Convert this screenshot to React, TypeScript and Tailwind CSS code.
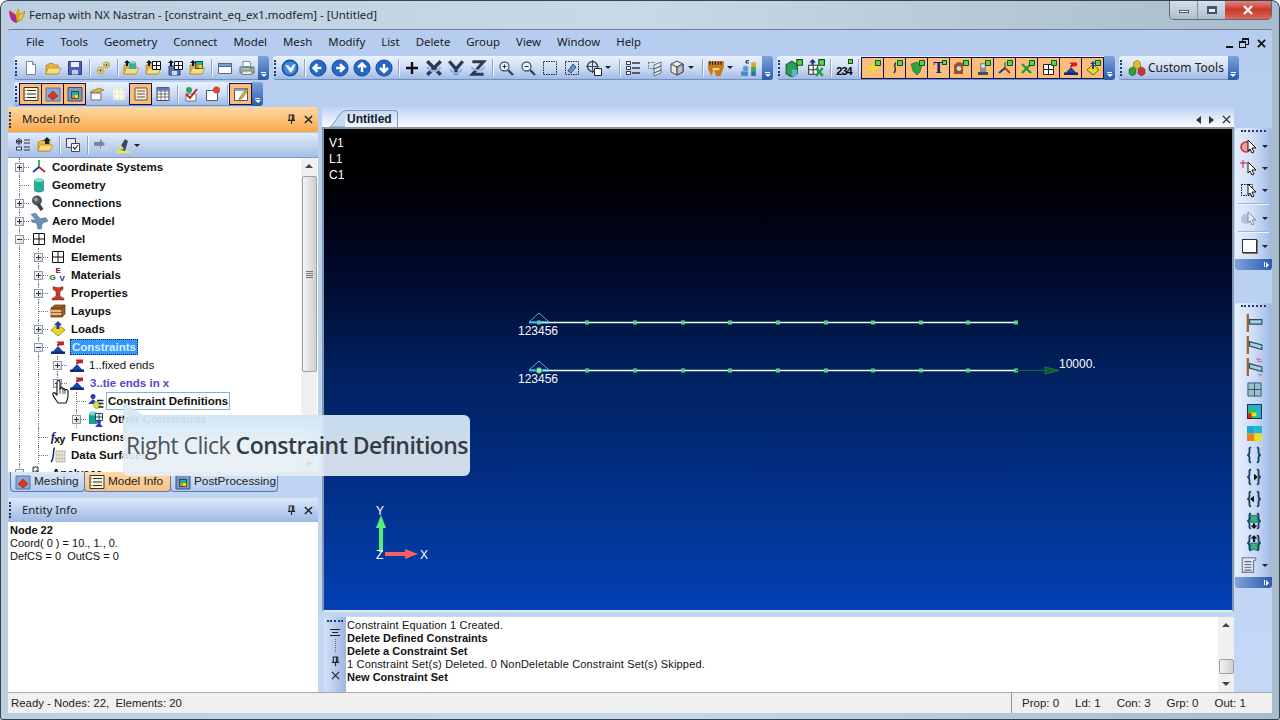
import type { ReactNode } from "react";

const SANS = "font-['Liberation_Sans',Arial,sans-serif]";
const UI = "font-['Noto_Sans',Arial,sans-serif]";

const S = ({ children, w = 16 }: { children: ReactNode; w?: number }) => (
  <svg viewBox="0 0 16 16" width={w} height={w} className="shrink-0">
    {children}
  </svg>
);

/* ---------- toolbar icons ---------- */
const NewDoc = () => (
  <S>
    <path d="M3.5 1.5h6l3 3v10h-9z" fill="#fff" stroke="#7a869c" />
    <path d="M9.5 1.5v3h3" fill="#d8e2f0" stroke="#7a869c" />
  </S>
);
const Folder = ({ children }: { children?: ReactNode }) => (
  <S>
    <path d="M1 14V5h2l1-1.5h4L9 5h4v9z" fill="#e8b840" stroke="#a07820" strokeWidth=".7" />
    <path d="M1 14l2-6h13l-3 6z" fill="#f8dc80" stroke="#b08a28" strokeWidth=".7" />
    {children}
  </S>
);
const Save = () => (
  <S>
    <path d="M1.5 1.5h13v13h-13z" fill="#4a62b8" stroke="#2c3c80" />
    <path d="M4 2h8v5H4z" fill="#e8eef8" />
    <path d="M5 10h6v4.500H5z" fill="#c4cce0" />
  </S>
);
const Gears = () => (
  <S>
    <circle cx="5.5" cy="10.5" r="3" fill="none" stroke="#d8b000" strokeWidth="2" strokeDasharray="1.4 .6" />
    <circle cx="11.5" cy="5" r="2.6" fill="none" stroke="#c8a000" strokeWidth="2" strokeDasharray="1.4 .6" />
    <circle cx="5.5" cy="10.5" r="1" fill="#333" />
    <circle cx="11.5" cy="5" r=".9" fill="#333" />
  </S>
);
const Up = () => <path d="M4 0l3 3H5v3H3V3H1z" fill="#111" />;
const GridBox = ({ x = 7, y = 1, s = 8, c = "#111" }: { x?: number; y?: number; s?: number; c?: string }) => (
  <g fill="#fff" stroke={c}>
    <path d={`M${x + 0.5} ${y + 0.5}h${s}v${s}h-${s}z`} />
    <path d={`M${x + 0.5 + s / 2} ${y + 0.5}v${s}M${x + 0.5} ${y + 0.5 + s / 2}h${s}`} fill="none" />
  </g>
);
const ColorGrid = ({ x = 6, y = 1 }: { x?: number; y?: number }) => (
  <g>
    <path d={`M${x} ${y}h4v4h-4z`} fill="#18a8d8" />
    <path d={`M${x + 4} ${y}h4v4h-4z`} fill="#18c060" />
    <path d={`M${x} ${y + 4}h4v4h-4z`} fill="#f08010" />
    <path d={`M${x + 4} ${y + 4}h4v4h-4z`} fill="#e8e020" />
    <path d={`M${x + 0.5} ${y + 0.5}h7v7h-7z`} fill="none" stroke="#234" strokeWidth=".8" />
  </g>
);
const FolderCyl = () => (
  <Folder>
    <path d="M6 2h7v7H6z" fill="#30b0a0" />
    <ellipse cx="9.5" cy="2.2" rx="3.5" ry="1.2" fill="#80e0d0" />
    <Up />
  </Folder>
);
const FolderGrid = () => (
  <Folder>
    <GridBox />
    <Up />
  </Folder>
);
const DiskGrid = () => (
  <S>
    <path d="M2 6h11v9H2z" fill="#5a70b8" stroke="#304080" />
    <path d="M5 11h5v4H5z" fill="#d0d8e8" />
    <GridBox />
    <Up />
  </S>
);
const FolderColor = () => (
  <Folder>
    <ColorGrid />
    <Up />
  </Folder>
);
const WinIcon = () => (
  <S>
    <path d="M1.5 3.5h13v10h-13z" fill="#fff" stroke="#4a6890" />
    <path d="M1.5 3.5h13v3h-13z" fill="#7aa0d0" stroke="#4a6890" />
  </S>
);
const Printer = () => (
  <S>
    <path d="M4 1.5h7l1 5H4z" fill="#fff" stroke="#7a8a98" />
    <path d="M1 7h14v6H1z" fill="#a8b4b8" stroke="#607070" />
    <path d="M3 11h10v3.5H3z" fill="#e8ece8" stroke="#708080" />
    <path d="M11 8.5h2" stroke="#20b040" strokeWidth="1.4" />
  </S>
);
const Globe = () => (
  <S w={18}>
    <circle cx="8" cy="8" r="7" fill="#2a6cc0" stroke="#174a90" />
    <circle cx="8" cy="8" r="5.6" fill="#3f8ad8" />
    <path d="M3.5 5l3 .5 2 2.5 2-3 2.5-.5-2 5-2.5 3-2-3z" fill="#e8f2fc" />
  </S>
);
const ArrowCircle = ({ d }: { d: string }) => (
  <S w={18}>
    <circle cx="8" cy="8" r="7.2" fill="#2468c0" stroke="#184c90" strokeWidth=".8" />
    <path d={d} fill="none" stroke="#fff" strokeWidth="2.2" />
  </S>
);
const Plus = () => (
  <S>
    <path d="M8 2v12M2 8h12" stroke="#111" strokeWidth="2.4" />
  </S>
);
const RotX = () => (
  <S w={18}>
    <path d="M2 2l12 12M14 2L2 14" stroke="#2c3c58" strokeWidth="3" />
    <path d="M2 7c3 5 9 5 12 0" fill="none" stroke="#8ab8e8" strokeWidth="2" />
  </S>
);
const RotY = () => (
  <S w={18}>
    <path d="M2 2l6 7 6-7M8 9v5" fill="none" stroke="#2c3c58" strokeWidth="3" />
    <path d="M3 9c3 5 7 5 10 0" fill="none" stroke="#8ab8e8" strokeWidth="2" />
  </S>
);
const RotZ = () => (
  <S w={18}>
    <path d="M3 2.500h10L3 13.500h10" fill="none" stroke="#2c3c58" strokeWidth="2.600" />
    <path d="M2 7c3 4 9 4 12 0" fill="none" stroke="#8ab8e8" strokeWidth="1.600" />
  </S>
);
const Zoom = ({ plus }: { plus?: boolean }) => (
  <S>
    <circle cx="6.500" cy="6.500" r="4.500" fill="#eaf2fc" stroke="#4a5c78" strokeWidth="1.300" />
    <path d="M10 10l5 5" stroke="#384658" strokeWidth="2.400" />
    <path d={plus ? "M4.500 6.500h4M6.500 4.500v4" : "M4.500 6.500h4"} stroke="#234" />
  </S>
);
const Marquee = () => (
  <S>
    <path d="M1.500 1.500h13v13h-13z" fill="none" stroke="#222" strokeDasharray="1.500 1" />
  </S>
);
const MarqueeIso = () => (
  <S>
    <path d="M1.500 1.500h13v13h-13z" fill="none" stroke="#222" strokeDasharray="1.500 1" />
    <path d="M4 11L9 4l3 3-5 6z" fill="#6a94c8" stroke="#34507c" />
  </S>
);
const Target = () => (
  <S>
    <circle cx="6.500" cy="6.500" r="5" fill="none" stroke="#3a4a50" strokeWidth="1.400" />
    <path d="M6.500 0v13M0 6.500h13" stroke="#3a4a50" />
    <path d="M8.500 8.500h7v7h-7z" fill="#fff" stroke="#223" />
  </S>
);
const ListBox = () => (
  <S>
    <path d="M1.500 1.500h4v3h-4zM1.500 6.500h4v3h-4zM1.500 11.500h4v3h-4z" fill="#fff" stroke="#334" />
    <path d="M7 3h8M7 8h8M7 13h8" stroke="#334" strokeWidth="1.400" />
  </S>
);
const Layers = () => (
  <S>
    <path d="M1.500 2.500h6v6h-6z" fill="none" stroke="#667" strokeDasharray="1.500 1" />
    <path d="M7 5l7-3v4l-7 3zM7 9l7-3v4l-7 3zM7 13l7-3v3l-7 3z" fill="#e4ecf6" stroke="#556" strokeWidth=".8" />
  </S>
);
const Cube = () => (
  <S>
    <path d="M8 1l6 3v8l-6 3-6-3V4z" fill="#e8e8e0" stroke="#445" />
    <path d="M2 4l6 3 6-3M8 7v8" fill="none" stroke="#445" />
    <path d="M8 7l6-3v8l-6 3z" fill="#b8c0c4" stroke="#445" />
  </S>
);
const Ruler = () => (
  <S w={18}>
    <path d="M1 2h14v5l-3 8H8L6 9 4 15 1 9z" fill="#c87818" />
    <path d="M2.500 2v3M5 2v3M7.500 2v3M10 2v3M12.500 2v3" stroke="#222" />
    <path d="M5 9h6" stroke="#f0e060" strokeWidth="2" />
  </S>
);
const Bars = () => (
  <S w={18}>
    <path d="M1 11h6v4H1z" fill="#4a88c8" />
    <circle cx="5" cy="8.500" r="2.500" fill="#58a0d0" />
    <path d="M10 3h4v12h-4z" fill="#e8a020" />
    <path d="M10 7h4v4h-4z" fill="#30b060" />
    <path d="M10 11h4v4h-4z" fill="#2070c0" />
    <path d="M5 1h3v1H6v1h2v1H5z" fill="#225" />
  </S>
);
const GroupAdd = () => (
  <S w={18}>
    <path d="M1 5l5-3 5 3v8l-5 3-5-3z" fill="#2c9c58" stroke="#1a6038" />
    <path d="M6 9l5 1v4l-5 2z" fill="#58b8c8" />
    <path d="M10.500 .500h5v5h-5z" fill="#58d848" stroke="#145020" />
  </S>
);
const GroupX = () => (
  <S w={18}>
    <GridBox x={1} y={5} s={8} c="#333" />
    <path d="M5 0l3 3H6v2H4V3H2z" fill="#1a2a90" />
    <path d="M8 8l6 7M14 8l-6 7" stroke="#20a040" strokeWidth="2.200" />
    <path d="M10.500 .500h5v5h-5z" fill="#58d848" stroke="#145020" />
  </S>
);
const Badge = () => <path d="M10.500 .500h5v5h-5z" fill="#58d848" stroke="#145020" />;

const Orange = ({ children }: { children: ReactNode }) => (
  <div className="w-[23px] h-[22px] border border-[#10105c] bg-[#fbbd78] flex items-center justify-center -ml-px first:ml-0 shrink-0">
    {children}
  </div>
);

const Constraint = ({ w = 16 }: { w?: number }) => (
  <S w={w}>
    <path d="M2 13.500L8 7l6 6.500z" fill="#1848a8" />
    <path d="M1 12.500h14v2.500H1z" fill="#152a70" />
    <path d="M7 7V2.500h7V6z" fill="#c8202c" />
    <path d="M6 6l2-2" stroke="#fff" />
  </S>
);
const Axes = () => (
  <S>
    <path d="M8 8V1" stroke="#20b050" strokeWidth="1.800" />
    <path d="M8 8l6 5" stroke="#d02828" strokeWidth="1.800" />
    <path d="M8 8l-6 5" stroke="#2030b0" strokeWidth="1.800" />
  </S>
);
const Cyl = () => (
  <S>
    <path d="M3.500 3h9v10.500c-2 2-7 2-9 0z" fill="#20b098" stroke="#1a7060" strokeWidth=".6" />
    <ellipse cx="8" cy="3" rx="4.500" ry="2" fill="#7ce0c8" />
  </S>
);
const Bolt = () => (
  <S>
    <circle cx="6" cy="5.500" r="5" fill="#50565c" />
    <circle cx="5" cy="4.500" r="2" fill="#9aa0a8" />
    <path d="M7 9l4 6" stroke="#3a3e44" strokeWidth="3.500" />
  </S>
);
const Aero = () => (
  <S w={18}>
    <path d="M1 2l4-1 4 5 5-1 2 3-5 2-1 5h-3l-1-5-4-1-1-2h4z" fill="#6a90b8" stroke="#486a90" strokeWidth=".5" />
  </S>
);
const Rail = () => (
  <S>
    <path d="M3 1.500c3 1.500 7 1.500 10 0v3c-2 1-3 2-3 3v3c0 1 2 2 4 3v1.500H2V13.500c2-1 4-2 4-3v-3c0-1-1-2-3-3z" fill="#c03a30" stroke="#802018" strokeWidth=".5" />
  </S>
);
const Layup = () => (
  <S>
    <path d="M1 5l4-3h10v9l-3 3H1z" fill="#a86428" stroke="#4a2a10" strokeWidth=".7" />
    <path d="M1 8h11M1 11h11" stroke="#f0d8a0" strokeWidth="1.500" />
    <path d="M12 5v9M1 5h11l3-3" fill="none" stroke="#4a2a10" strokeWidth=".7" />
  </S>
);
const Load = () => (
  <S>
    <path d="M8 3l7 6-7 6-7-6z" fill="#e8d820" stroke="#807000" strokeWidth=".7" />
    <path d="M8 0l4 4H9.500v4h-3V4H4z" fill="#2838b0" />
  </S>
);
const ConDef = () => (
  <S>
    <circle cx="5" cy="3.500" r="2.500" fill="#3038b0" />
    <path d="M0 11l5-5 5 5z" fill="#3038b0" />
    <circle cx="9" cy="12" r="3.500" fill="#d8e048" stroke="#80a020" strokeWidth=".6" />
    <path d="M9 7.500h6.500M10.500 10.500h5M10.500 14h5" stroke="#225" strokeWidth="1.300" />
  </S>
);
const Other = () => (
  <S>
    <path d="M1 2h8v11H1z" fill="#18a090" />
    <ellipse cx="5" cy="2.500" rx="4" ry="2" fill="#70d8c8" />
    <GridBox x={7} y={2} s={7} c="#246" />
    <circle cx="11" cy="11" r="2" fill="#3038b0" />
    <path d="M7 16l4-4.500 4 4.500z" fill="#3038b0" />
  </S>
);
const ListIcon = () => (
  <S>
    <path d="M1 1.500h14v13H1z" fill="#fdf4d8" stroke="#333" />
    <path d="M4 4.500h9M4 8h9M4 11.500h9M1.500 4.500h1M1.500 8h1M1.500 11.500h1" stroke="#234" strokeWidth="1.200" />
  </S>
);
const MeshIcon = () => (
  <S>
    <path d="M1 2h14v13H1z" fill="#8aa8d8" stroke="#5878a8" />
    <path d="M8 5l5 5-5 4-5-4z" fill="#d83818" stroke="#902010" strokeWidth=".6" />
  </S>
);
const WinColor = () => (
  <S>
    <path d="M1 1.500h14v13.500H1z" fill="#7898c8" stroke="#35507a" />
    <ColorGrid x={4} y={5} />
  </S>
);

const Sep = () => (
  <div className="w-[6px] h-[18px] flex justify-center shrink-0">
    <div className="w-px h-full bg-[#8ea6cc] shadow-[1px_0_0_#f2f7ff]" />
  </div>
);
const Btn = ({ children }: { children: ReactNode }) => (
  <div className="w-[22px] h-[22px] flex items-center justify-center shrink-0">{children}</div>
);
const Caret = () => (
  <div className="w-[11px] h-[22px] flex items-center shrink-0">
    <div className="border-x-[3px] border-x-transparent border-t-[3px] border-t-[#222]" />
  </div>
);
const Grip = () => (
  <div className="w-[6px] h-[16px] shrink-0 border-l-2 border-dotted border-l-[#1f3a70] ml-[1px] -mr-[1px]" />
);
const Chevron = () => (
  <div className="w-[11px] self-stretch rounded-r-[3px] bg-gradient-to-b from-[#7fa2dc] to-[#2a5cab] flex flex-col items-center justify-end pb-[3px] gap-px shrink-0">
    <div className="w-[5px] h-px bg-white" />
    <div className="border-x-[3px] border-x-transparent border-t-[3px] border-t-white" />
  </div>
);
const Toolbar = ({ children, className = "" }: { children: ReactNode; className?: string }) => (
  <div className={`flex h-[24px] shrink-0 ${className}`}>
    <div className="flex items-center rounded-l-[3px] bg-gradient-to-b from-[#e9f1fd] via-[#cfdef6] to-[#a2bbe4] border-b border-b-[#6f8fc4]">
      {children}
    </div>
    <Chevron />
  </div>
);

/* ---------- tree ---------- */
type RowProps = {
  guides: boolean[];
  exp?: "+" | "-";
  icon: ReactNode;
  children: ReactNode;
};
const Guide = ({ on }: { on: boolean }) => (
  <div className="w-[19px] h-[18px] shrink-0 flex justify-center">
    {on && <div className="h-full border-l border-dotted border-l-[#777]" />}
  </div>
);
const Row = ({ guides, exp, icon, children }: RowProps) => (
  <div className="flex items-center h-[18px] whitespace-nowrap">
    {guides.map((g, i) => (
      <Guide key={i} on={g} />
    ))}
    <div className="relative w-[19px] h-[18px] shrink-0 flex items-center justify-center">
      <div className="absolute left-[9px] top-0 h-full border-l border-dotted border-l-[#777]" />
      <div className="absolute left-[9px] right-0 top-[9px] border-t border-dotted border-t-[#777]" />
      {exp && (
        <div className="relative w-[9px] h-[9px] border border-[#8c98a8] bg-gradient-to-br from-white to-[#d4dce8] flex items-center justify-center">
          <div className="w-[5px] h-px bg-[#333]" />
          {exp === "+" && <div className="absolute w-px h-[5px] bg-[#333]" />}
        </div>
      )}
    </div>
    <div className="w-[19px] flex justify-center shrink-0">{icon}</div>
    {children}
  </div>
);
const Label = ({ children }: { children: ReactNode }) => (
  <span className="ml-[4px] mt-[2px] font-bold text-[#111]">{children}</span>
);

const Tab = ({ on, icon, children, w }: { on?: boolean; icon: ReactNode; children: ReactNode; w: string }) => (
  <div
    className={`h-[20px] ${w} flex items-center gap-[3px] pl-[4px] rounded-b-[4px] border border-t-0 border-[#5c7ba8] text-[11.8px] text-[#222] -ml-px first:ml-0 ${
      on ? "bg-gradient-to-b from-[#fdd9a8] to-[#f9c080]" : "bg-gradient-to-b from-[#dbe7f8] to-[#b4cbee]"
    }`}
  >
    {icon}
    <span>{children}</span>
  </div>
);

const Scrollbar = ({ top, thumb, children }: { top: string; thumb: string; children?: ReactNode }) => (
  <div className="w-[16px] shrink-0 bg-[#f0f0f0] flex flex-col items-center relative">
    <div className="h-[16px] flex items-center justify-center shrink-0">
      <div className="border-x-[4px] border-x-transparent border-b-[4px] border-b-[#444]" />
    </div>
    <div className={`${top} shrink-0`} />
    <div className={`${thumb} w-[15px] shrink-0 rounded-[2px] border border-[#a0a0a0] bg-gradient-to-r from-[#f4f4f4] to-[#cfcfcf] flex flex-col items-center justify-center gap-px`}>
      {children}
    </div>
    <div className="flex-1" />
    <div className="h-[16px] flex items-center justify-center shrink-0">
      <div className="border-x-[4px] border-x-transparent border-t-[4px] border-t-[#444]" />
    </div>
  </div>
);

const PinClose = () => (
  <div className="flex items-center gap-[8px] mr-[5px]">
    <svg viewBox="0 0 10 12" width="9" height="11">
      <path d="M2.500 1h5v6h-5zM1 7h8M5 7v4M6 1v6" fill="none" stroke="#222" strokeWidth="1.200" />
    </svg>
    <svg viewBox="0 0 10 10" width="9" height="9">
      <path d="M1 1l8 8M9 1L1 9" stroke="#222" strokeWidth="1.600" />
    </svg>
  </div>
);

const VT = ({ children, h, className = "" }: { children: ReactNode; h: string; className?: string }) => (
  <div className={`${h} w-[37px] ml-[1px] rounded-[3px] overflow-hidden flex flex-col bg-gradient-to-r from-[#e6effc] via-[#cfdef6] to-[#9fb8e2] ${className}`}>
    <div className="h-[5px] mx-[6px] mt-[2px] shrink-0 border-t-2 border-dotted border-t-[#1f3a70]" />
    <div className="flex-1 flex flex-col">{children}</div>
    <div className="h-[11px] shrink-0 bg-gradient-to-r from-[#7fa2dc] to-[#2a5cab] flex items-center justify-end pr-[3px] gap-px">
      <div className="w-px h-[5px] bg-white" />
      <div className="border-y-[3px] border-y-transparent border-l-[3px] border-l-white" />
    </div>
  </div>
);
const VItem = ({ children, caret, center }: { children: ReactNode; caret?: boolean; center?: boolean }) => (
  <div className={`h-[22px] flex items-center shrink-0 gap-[4px] ${center ? "pl-[10px]" : "pl-[5px]"}`}>
    <div className="w-[18px] flex justify-center shrink-0">{children}</div>
    {caret && <div className="border-x-[3px] border-x-transparent border-t-[3px] border-t-[#222]" />}
  </div>
);
const VSep = () => <div className="h-[6px] mx-[3px] shrink-0 flex items-center"><div className="w-full h-px bg-[#f0f5ff] shadow-[0_-1px_0_#9db5da]" /></div>;
const Pointer = ({ children, faded }: { children?: ReactNode; faded?: boolean }) => (
  <svg viewBox="0 0 18 18" width="18" height="18" className={faded ? "opacity-40" : ""}>
    {children}
    <path d="M8 3l8 8h-4l2 4-2 1-2-4-2 2z" fill="#fff" stroke="#111" />
  </svg>
);
const Beam = ({ tilt = 0, waves }: { tilt?: number; waves?: boolean }) => (
  <S w={18}>
    <path d="M2.500 0v16" stroke="#a06428" strokeWidth="2" />
    <path d={`M4 5l11 ${tilt}v4l-11 ${-tilt}z`} fill="#a8d0d8" stroke="#204a70" />
    {waves && <path d="M10 1c1-1 2 1 4 0M11 3c1-1 2 1 4 0M12 15c1-1 2 1 3 0" fill="none" stroke="#c83868" strokeWidth=".8" />}
  </S>
);
const Brace = ({ children }: { children?: ReactNode }) => (
  <S w={18}>
    <path d="M5.500 1.500H5C3.500 1.500 4 3 4 5 4 7 3.500 8 2 8c1.500 0 2 1 2 3s-.5 3.500 1 3.500h.5M10.500 1.500h.5c1.500 0 1 1.500 1 3.500 0 2 .5 3 2 3-1.500 0-2 1-2 3s.5 3.500-1 3.500h-.5" fill="none" stroke="#15406c" strokeWidth="1.600" />
    {children}
  </S>
);

const NODE_X = [539, 587, 635, 683, 730, 778, 826, 873, 921, 968, 1016];

// viewBox uses the window's own pixel coordinates, so the model reads as plotted
const Viewport = () => (
  <svg viewBox="324 129 908 481" className="absolute inset-0 w-full h-full">
    {[322, 370].map((y) => (
      <g key={y}>
        <path d={`M529 ${y + 0.5}h20`} stroke="#3fb4dc" strokeWidth="2" />
        <path d={`M539 ${y + 0.5}H1016`} stroke="#eafff2" strokeWidth="1.500" />
        {NODE_X.map((x) => (
          <rect key={x} x={x - 2} y={y - 1.500} width="4" height="4" fill="#5fd08a" />
        ))}
        <path d={`M529 ${y}l10-9 10 9z`} fill="none" stroke="#4fb8e0" />
        <text x="518" y={y + 13} fill="#f4f8ff" fontSize="12" fontFamily="Liberation Sans">123456</text>
      </g>
    ))}
    <circle cx="539" cy="370.500" r="3" fill="#8ff0b0" stroke="#2a7050" />
    <path d="M1016 370.500h43" stroke="#0c6a30" strokeWidth="1.200" />
    <path d="M1045 367v7l14-3.500z" fill="#0a5a2c" stroke="#1a8a44" strokeWidth=".8" />
    <text x="1059" y="368" fill="#fff" fontSize="12" fontFamily="Liberation Sans">10000.</text>
    <path d="M381 552V526" stroke="#55ee77" strokeWidth="4" />
    <path d="M376 528l5-13 5 13z" fill="#55ee77" />
    <path d="M385 554h22" stroke="#f86060" strokeWidth="4" />
    <path d="M405 549l13 5-13 5z" fill="#f86060" />
    <text x="376" y="515" fill="#fff" fontSize="12" fontFamily="Liberation Sans">Y</text>
    <text x="376" y="559" fill="#fff" fontSize="12" fontFamily="Liberation Sans">Z</text>
    <text x="420" y="559" fill="#fff" fontSize="12" fontFamily="Liberation Sans">X</text>
  </svg>
);

export default function App() {
  const menu = ["File", "Tools", "Geometry", "Connect", "Model", "Mesh", "Modify", "List", "Delete", "Group", "View", "Window", "Help"];

  return (
    <div className={`relative w-[1280px] h-[720px] overflow-hidden flex flex-col rounded-t-[8px] bg-gradient-to-r from-[#bccfe2] via-[#c8d8e6] to-[#a8bccb] ${SANS} text-[12px] text-[#111]`}>
      {/* Title bar */}
      <div className="h-[29px] shrink-0 flex items-start">
        <div className="ml-[8px] mt-[6px] w-[18px] h-[18px]">
          <S w={18}>
            <path d="M2 3l5 4 2-6 2 6 4-2-2 6c-2 4-8 4-10 0z" fill="#d8b028" />
            <path d="M1 4l6 4 1 7c-4 0-7-4-7-11z" fill="#a82898" />
            <path d="M9 8l6-3-2 6-4 3z" fill="#e8c830" stroke="#806010" strokeWidth=".4" />
          </S>
        </div>
        <div className={`ml-[3px] mt-[6px] text-[11.4px] text-[#1c2430] whitespace-nowrap ${UI}`}>
          Femap with NX Nastran - [constraint_eq_ex1.modfem] - [Untitled]
        </div>
        <div className="ml-auto mr-[8px] flex h-[20px] rounded-b-[5px] overflow-hidden border border-t-0 border-[#5b6b78]">
          <div className="w-[28px] bg-gradient-to-b from-[#d6e2ec] to-[#aebfce] flex items-center justify-center border-r border-r-[#7f8f9c]">
            <div className="w-[10px] h-[3px] mt-[4px] bg-white border border-[#556]" />
          </div>
          <div className="w-[27px] bg-gradient-to-b from-[#d6e2ec] to-[#aebfce] flex items-center justify-center">
            <div className="w-[10px] h-[8px] bg-white/60 border-2 border-t-[3px] border-[#445766]" />
          </div>
          <div className="w-[46px] bg-gradient-to-b from-[#e09088] via-[#c8382c] to-[#d86858] flex items-center justify-center">
            <svg viewBox="0 0 12 10" width="12" height="10">
              <path d="M2 1l8 8M10 1L2 9" stroke="#fff" strokeWidth="2.400" />
            </svg>
          </div>
        </div>
      </div>

      {/* Application */}
      <div className="mx-[8px] flex-1 min-h-0 flex flex-col bg-gradient-to-b from-[#b6cdef] to-[#c4d8f6] border-t border-t-[#6a7f98] rounded-t-[2px]">
        {/* Menu */}
        <div className={`h-[26px] shrink-0 flex items-center ${UI}`}>
          <div className="flex ml-[18px] mb-[2px] gap-[16px] text-[11.4px] text-[#1a1a1a]">
            {menu.map((m) => (
              <span key={m}>{m}</span>
            ))}
          </div>
          <div className="ml-auto mr-[6px] flex items-center gap-[6px]">
            <div className="w-[7px] h-[2px] bg-[#111] mt-[8px]" />
            <div className="relative w-[10px] h-[10px]">
              <div className="absolute right-0 top-0 w-[7px] h-[7px] border border-t-2 border-[#111]" />
              <div className="absolute left-0 bottom-0 w-[7px] h-[7px] border border-t-2 border-[#111] bg-[#bcd2f2]" />
            </div>
            <svg viewBox="0 0 10 10" width="9" height="9" className="ml-[2px]">
              <path d="M1 1l8 8M9 1L1 9" stroke="#111" strokeWidth="2" />
            </svg>
          </div>
        </div>

        {/* Toolbar row 1 */}
        <div className="h-[26px] shrink-0 flex items-start pl-[6px]">
          <Toolbar>
            <Grip />
            <Btn><NewDoc /></Btn>
            <Btn><Folder /></Btn>
            <Btn><Save /></Btn>
            <Sep />
            <Btn><Gears /></Btn>
            <Sep />
            <Btn><FolderCyl /></Btn>
            <Btn><FolderGrid /></Btn>
            <Btn><DiskGrid /></Btn>
            <Btn><FolderColor /></Btn>
            <Sep />
            <Btn><WinIcon /></Btn>
            <Btn><Printer /></Btn>
          </Toolbar>
          <Toolbar className="ml-[4px]">
            <Grip />
            <Btn><Globe /></Btn>
            <Sep />
            <Btn><ArrowCircle d="M11 8H4.500M7.500 4.500L4 8l3.500 3.500" /></Btn>
            <Btn><ArrowCircle d="M4.500 8H11M8 4.500L11.500 8 8 11.500" /></Btn>
            <Btn><ArrowCircle d="M8 11.500V4.500M4.500 7.500L8 4l3.500 3.500" /></Btn>
            <Btn><ArrowCircle d="M8 4.500V11M4.500 8L8 11.500 11.500 8" /></Btn>
            <Sep />
            <Btn><Plus /></Btn>
            <Btn><RotX /></Btn>
            <Btn><RotY /></Btn>
            <Btn><RotZ /></Btn>
            <Sep />
            <Btn><Zoom plus /></Btn>
            <Btn><Zoom /></Btn>
            <Btn><Marquee /></Btn>
            <Btn><MarqueeIso /></Btn>
            <Btn><Target /></Btn>
            <Caret />
            <Sep />
            <Btn><ListBox /></Btn>
            <Btn><Layers /></Btn>
            <Btn><Cube /></Btn>
            <Caret />
            <Sep />
            <Btn><Ruler /></Btn>
            <Caret />
            <Btn><Bars /></Btn>
            <div className="w-[2px]" />
          </Toolbar>
          <Toolbar className="ml-[4px]">
            <Grip />
            <Btn><GroupAdd /></Btn>
            <Btn><GroupX /></Btn>
            <Sep />
            <Btn>
              <div className="relative w-[18px] h-[18px] flex items-end justify-center">
                <span className="font-bold text-[11px] leading-[12px] tracking-[-1px] text-black">234</span>
                <div className="absolute right-0 top-0 w-[5px] h-[5px] bg-[#58d848] border border-[#145020]" />
              </div>
            </Btn>
            <Sep />
            <div className="flex">
              <Orange><S><path d="M8 3v10M3 8h10" stroke="#f0e020" strokeWidth="2" /><Badge /></S></Orange>
              <Orange><S><path d="M9 3C5 5 11 8 7 13" fill="none" stroke="#333" strokeWidth="1.400" /><Badge /></S></Orange>
              <Orange><S><path d="M2 4l6-2 5 3-2 7-3 3-4-4z" fill="#30a040" stroke="#185020" strokeWidth=".5" /><Badge /></S></Orange>
              <Orange>
                <div className="relative w-[16px] h-[16px] flex items-center justify-center">
                  <span className="font-['Liberation_Serif',serif] font-bold text-[16px] leading-none text-[#20187c]">T</span>
                  <div className="absolute right-0 top-0 w-[5px] h-[5px] bg-[#58d848] border border-[#145020]" />
                </div>
              </Orange>
              <Orange><S><path d="M1 5l4-3 5 1v11H1z" fill="#a84e18" /><circle cx="6" cy="8.500" r="3" fill="#d8d8d8" stroke="#555" /><Badge /></S></Orange>
              <Orange><S><path d="M3 12h10v3H3z" fill="#4a4e54" /><path d="M5 3h6v9H5z" fill="#8a9098" /><circle cx="8" cy="6" r="2" fill="#ddd" /><Badge /></S></Orange>
              <Orange><S><path d="M8 8V2" stroke="#20b050" strokeWidth="1.800" /><path d="M8 8l5 5" stroke="#d02828" strokeWidth="1.800" /><path d="M8 8l-6 5" stroke="#2030b0" strokeWidth="1.800" /><Badge /></S></Orange>
              <Orange><S><path d="M3 4l9 9M12 4l-9 9" stroke="#18a030" strokeWidth="2.400" /><Badge /></S></Orange>
              <Orange><S><path d="M2.500 4.500h10v10h-10z" fill="#fff" stroke="#222" /><path d="M7.500 4.500v10M2.500 9.500h10" stroke="#222" /><Badge /></S></Orange>
              <Orange><Constraint /></Orange>
              <Orange><S><path d="M8 4l6 6-6 5-6-5z" fill="#e8d820" stroke="#333" strokeWidth=".7" /><path d="M8 1l3 3H9v5H7V4H5z" fill="#2838b0" /><Badge /></S></Orange>
            </div>
          </Toolbar>
          <Toolbar className="ml-[4px]">
            <Grip />
            <div className="pl-[3px] flex items-center gap-[2px] pr-[4px]">
              <S w={18}>
                <path d="M8 1l3 2v4l-3 2-3-2V3z" fill="#e0c020" stroke="#806000" strokeWidth=".5" />
                <path d="M4 7l3 2v4l-3 2-3-2V9z" fill="#30a030" stroke="#105010" strokeWidth=".5" />
                <path d="M12 7l3 2v4l-3 2-3-2V9z" fill="#d03030" stroke="#701010" strokeWidth=".5" />
              </S>
              <span className={`${UI} whitespace-nowrap text-[#222]`}>Custom Tools</span>
            </div>
          </Toolbar>
        </div>

        {/* Toolbar row 2 */}
        <div className="h-[25px] shrink-0 flex items-start pl-[6px]">
          <Toolbar>
            <Grip />
            <Orange><ListIcon /></Orange>
            <Orange><MeshIcon /></Orange>
            <Orange><WinColor /></Orange>
            <Btn><S><path d="M1 6l9-4 5 2-9 4z" fill="#d8b840" stroke="#706020" strokeWidth=".6" /><path d="M2 7h10v7H2z" fill="#fff" stroke="#667" /></S></Btn>
            <Btn><S><path d="M2 2h12v12H2z" fill="#eee8d0" /><path d="M6 2v12M10 2v12M2 6h12M2 10h12" stroke="#fff" /></S></Btn>
            <Orange><S><path d="M2 2h12v12H2z" fill="#fdf0d0" stroke="#555" /><path d="M4 5h8M4 8h8M4 11h8" stroke="#555" /></S></Orange>
            <Btn><S><path d="M2 1.500h12v13H2z" fill="#fff" stroke="#445" /><path d="M6 1.500v13M10 1.500v13M2 5h12M2 8h12M2 11h12" stroke="#445" strokeWidth=".7" /><path d="M2 1.500h12v3H2z" fill="#5a78b8" /></S></Btn>
            <Sep />
            <Btn><S><path d="M3 8h10v7H3z" fill="#fff" stroke="#777" /><path d="M3 8l4 4 7-9" fill="none" stroke="#c02828" strokeWidth="2" /><circle cx="6" cy="4" r="3" fill="#30a060" /></S></Btn>
            <Btn><S><path d="M1.500 4.500h11v10h-11z" fill="#fff" stroke="#556" /><circle cx="11.500" cy="4" r="3.500" fill="#d84830" /></S></Btn>
            <Sep />
            <Orange><S><path d="M1.500 2.500h13v12h-13z" fill="#fff" stroke="#556" /><path d="M1.500 2.500h13v2.500h-13z" fill="#88a0c8" /><path d="M7 11l6-8 2 1.500-6 8-3 1z" fill="#e0b030" stroke="#604000" strokeWidth=".5" /></S></Orange>
          </Toolbar>
        </div>

        {/* Main area */}
        <div className="flex-1 min-h-0 flex">
          {/* Left panels */}
          <div className="w-[310px] shrink-0 flex flex-col">
            <div className="h-[25px] shrink-0 flex items-center rounded-t-[2px] bg-gradient-to-b from-[#fdd8a4] to-[#f9a846]">
              <Grip />
              <span className={`ml-[8px] mb-[2px] ${UI} text-[11.4px] text-[#222]`}>Model Info</span>
              <div className="ml-auto"><PinClose /></div>
            </div>
            <div className="h-[25px] shrink-0 mt-px flex items-center pl-[4px] bg-gradient-to-b from-[#e2ecfb] to-[#a6bee6] border-b border-b-[#7f9acc]">
              <Btn><S><path d="M1.500 3h5v3h-5zM1.500 10h5v3h-5z" fill="#fff" stroke="#334" /><path d="M4 1v7M1 4.500h6" stroke="#334" /><path d="M9 3h6M9 6h6M9 10h6M9 13h6" stroke="#334" /></S></Btn>
              <Btn><Folder><path d="M10 0l4 4h-2v3H8V4H6z" fill="#222" /></Folder></Btn>
              <Sep />
              <Btn><S><path d="M1.500 1.500h9v9h-9z" fill="#e4ecf6" stroke="#445" /><path d="M6.500 6.500h8v8h-8z" fill="#fff" stroke="#445" /><path d="M8 10l2 2 3-4" fill="none" stroke="#234" strokeWidth="1.200" /></S></Btn>
              <Sep />
              <Btn><S><path d="M1 5h6V2l5 5-5 5V9H1z" fill="#6f8aae" /><path d="M8 9h7v5H8z" fill="#c8d2e0" /></S></Btn>
              <Btn><S><path d="M1 14h14v2H1z" fill="#ecec30" /><path d="M4 12l6-10 3 2-3 10z" fill="#3a4668" /><path d="M3 13l3-5 3 4z" fill="#ecec30" /></S></Btn>
              <Caret />
            </div>

            {/* Tree */}
            <div className="h-[314px] shrink-0 flex bg-white overflow-hidden pr-px text-[11.5px]">
              <div className="flex-1 pl-[2px] overflow-hidden">
                <Row guides={[]} exp="+" icon={<Axes />}><Label>Coordinate Systems</Label></Row>
                <Row guides={[]} icon={<Cyl />}><Label>Geometry</Label></Row>
                <Row guides={[]} exp="+" icon={<Bolt />}><Label>Connections</Label></Row>
                <Row guides={[]} exp="+" icon={<Aero />}><Label>Aero Model</Label></Row>
                <Row guides={[]} exp="-" icon={<S><GridBox x={2} y={2} s={11} /></S>}><Label>Model</Label></Row>
                <Row guides={[true]} exp="+" icon={<S><GridBox x={2} y={2} s={11} /></S>}><Label>Elements</Label></Row>
                <Row guides={[true]} exp="+" icon={
                  <div className="relative w-[16px] h-[16px] text-[8px] leading-none font-bold">
                    <span className="absolute left-0 top-[7px] text-[#107010]">G</span>
                    <span className="absolute left-[6px] top-0 text-[#801030]">E</span>
                    <span className="absolute left-[10px] top-[8px] text-[#202090]">V</span>
                  </div>
                }><Label>Materials</Label></Row>
                <Row guides={[true]} exp="+" icon={<Rail />}><Label>Properties</Label></Row>
                <Row guides={[true]} icon={<Layup />}><Label>Layups</Label></Row>
                <Row guides={[true]} exp="+" icon={<Load />}><Label>Loads</Label></Row>
                <Row guides={[true]} exp="-" icon={<Constraint />}>
                  <span className="ml-[3px] px-px h-[16px] leading-[15px] font-bold text-[#d8eeff] bg-[#3399ff] border border-dotted border-[#0b2a50]">Constraints</span>
                </Row>
                <Row guides={[true, true]} exp="+" icon={<Constraint />}>
                  <span className="ml-[3px] mt-[2px] text-[#111]">1..fixed ends</span>
                </Row>
                <Row guides={[true, true]} exp="+" icon={<Constraint />}>
                  <span className="ml-[4px] mt-[2px] font-bold text-[#5548c8]">3..tie ends in x</span>
                </Row>
                <Row guides={[true, true, false]} icon={<ConDef />}>
                  <span className="ml-[1px] px-[1px] h-[18px] leading-[16px] font-bold text-[#111] border border-[#7fb2dc]">Constraint Definitions</span>
                </Row>
                <Row guides={[true, true, false]} exp="+" icon={<Other />}><Label>Other Constraints</Label></Row>
                <Row guides={[true]} icon={
                  <span className="font-['Liberation_Serif',serif] font-bold italic text-[13px] text-[#20206c] whitespace-nowrap tracking-[-1px]">f<span className="not-italic font-['Liberation_Sans',sans-serif] text-[11px] relative top-[2px] text-[#111]">xy</span></span>
                }><Label>Functions</Label></Row>
                <Row guides={[true]} icon={
                  <S>
                    <path d="M6 4h9v11H6z" fill="#f4ecd0" stroke="#999" strokeWidth=".7" />
                    <path d="M9 4v11M12 4v11M6 8h9M6 11.500h9" stroke="#aaa" strokeWidth=".6" />
                    <path d="M5 1C3 1 4 6 3 10c0 3-1 4-2 5" fill="none" stroke="#20206c" strokeWidth="1.500" />
                  </S>
                }><Label>Data Surfaces</Label></Row>
                <Row guides={[]} exp="-" icon={<S><path d="M2 2h5v5H2zM9 9h5v5H9z" fill="#fff" stroke="#223" /><path d="M5 5l6 6" stroke="#223" /></S>}><Label>Analyses</Label></Row>
              </div>
              <Scrollbar top="h-[2px]" thumb="h-[196px]">
                <div className="w-[7px] h-px bg-[#777]" />
                <div className="w-[7px] h-px bg-[#777]" />
                <div className="w-[7px] h-px bg-[#777]" />
                <div className="w-[7px] h-px bg-[#777]" />
              </Scrollbar>
            </div>

            {/* Panel tabs */}
            <div className="h-[20px] shrink-0 flex pl-[2px]">
              <Tab w="w-[75px]" icon={<MeshIcon />}>Meshing</Tab>
              <Tab on w="w-[87px]" icon={<ListIcon />}>Model Info</Tab>
              <Tab w="w-[108px]" icon={<WinColor />}>PostProcessing</Tab>
            </div>

            <div className="mt-[6px] h-[24px] shrink-0 flex items-center rounded-t-[2px] bg-gradient-to-b from-[#dce8f9] to-[#9fb9e4]">
              <Grip />
              <span className={`ml-[8px] ${UI} text-[11.4px] text-[#222]`}>Entity Info</span>
              <div className="ml-auto"><PinClose /></div>
            </div>
            <div className="flex-1 bg-white pl-[2px] pt-[2px] text-[11px] leading-[13px] text-[#111]">
              <div className="font-bold">Node 22</div>
              <div>Coord( 0 ) = 10., 1., 0.</div>
              <div className="whitespace-pre">DefCS = 0  OutCS = 0</div>
            </div>
          </div>

          {/* Centre */}
          <div className="w-[912px] ml-[4px] shrink-0 flex flex-col">
            <div className="h-[20px] shrink-0 flex items-end bg-gradient-to-b from-[#bdd3f3] to-[#fbfdff] pl-[8px]">
              <svg viewBox="0 0 16 17" width="16" height="17" className="shrink-0 -mr-px">
                <path d="M0 17C6 13 9 1 15 1h1v16z" fill="#c8daf2" stroke="#7f97b8" />
              </svg>
              <div className="h-[17px] pl-[2px] pr-[5px] bg-gradient-to-b from-[#c8daf2] to-[#f4f8fe] border-t border-r border-[#7f97b8] rounded-tr-[4px] font-bold text-[12px] leading-[16px] text-[#14202e]">
                Untitled
              </div>
              <div className="ml-auto mr-[3px] mb-[3px] flex items-center gap-[8px]">
                <div className="border-y-[4px] border-y-transparent border-r-[5px] border-r-[#333]" />
                <div className="border-y-[4px] border-y-transparent border-l-[5px] border-l-[#333]" />
                <svg viewBox="0 0 10 10" width="9" height="9"><path d="M1 1l8 8M9 1L1 9" stroke="#222" strokeWidth="1.400" /></svg>
              </div>
            </div>
            <div className="h-[485px] shrink-0 border-2 border-[#8497ad] border-b-[#dfe9f4] p-0">
              <div className="relative w-full h-full overflow-hidden bg-gradient-to-b from-[#000000] via-[#01205e] to-[#0341b4]">
                <div className="absolute left-[5px] top-[6px] text-[12px] leading-[16px] text-white">
                  <div>V1</div>
                  <div>L1</div>
                  <div>C1</div>
                </div>
                <Viewport />
              </div>
            </div>
            <div className="h-[75px] mt-[5px] shrink-0 flex ml-[2px]">
              <div className="w-[22px] shrink-0 bg-gradient-to-r from-[#d4e2f8] to-[#9cb6e0] flex flex-col items-center pt-[3px]">
                <div className="w-[16px] border-t-2 border-dotted border-t-[#1f3a70]" />
                <div className="mt-[7px] flex flex-col gap-[2px] items-center">
                  <div className="w-[10px] h-px bg-[#222]" />
                  <div className="w-[6px] h-px bg-[#222]" />
                  <div className="w-[10px] h-px bg-[#222]" />
                </div>
                <div className="h-[13px] mt-[3px] border-l border-dotted border-l-[#667]" />
                <div className="mt-[4px]">
                  <svg viewBox="0 0 10 12" width="9" height="11">
                    <path d="M2.500 1h5v6h-5zM1 7h8M5 7v4M6 1v6" fill="none" stroke="#222" strokeWidth="1.200" />
                  </svg>
                </div>
                <svg viewBox="0 0 10 10" width="9" height="9" className="mt-[4px]"><path d="M1 1l8 8M9 1L1 9" stroke="#222" strokeWidth="1.300" /></svg>
              </div>
              <div className="flex-1 bg-white pl-[1px] pt-[2px] text-[11px] leading-[13px] text-[#111]">
                <div className="tracking-[0.17px]">Constraint Equation 1 Created.</div>
                <div className="font-bold">Delete Defined Constraints</div>
                <div className="font-bold">Delete a Constraint Set</div>
                <div className="tracking-[0.17px]">1 Constraint Set(s) Deleted. 0 NonDeletable Constraint Set(s) Skipped.</div>
                <div className="font-bold">New Constraint Set</div>
              </div>
              <Scrollbar top="h-[26px]" thumb="h-[15px]" />
            </div>
          </div>

          {/* Right toolbars */}
          <div className="flex-1 flex flex-col">
            <VT h="h-[142px]" className="mt-[21px]">
              <VItem caret><Pointer><circle cx="6" cy="10" r="5" fill="#f0a0a0" stroke="#c83030" strokeWidth="1.500" /></Pointer></VItem>
              <VItem caret><Pointer><path d="M3 1v8M0 4h7" stroke="#c02040" /></Pointer></VItem>
              <VItem caret><Pointer><path d="M1.500 3.500h11v11h-11z" fill="none" stroke="#111" strokeDasharray="1.500 1" /></Pointer></VItem>
              <VSep />
              <VItem caret><Pointer faded><circle cx="6" cy="10" r="5" fill="#8090a8" /></Pointer></VItem>
              <VSep />
              <VItem caret><div className="w-[15px] h-[14px] bg-white border border-[#333] shadow-[1px_1px_0_#777]" /></VItem>
            </VT>
            <VT h="h-[285px]" className="mt-[33px]">
              <div className="pt-[2px]" />
              <VItem center><Beam /></VItem>
              <VItem center><Beam tilt={3} /></VItem>
              <VItem center><Beam tilt={3} waves /></VItem>
              <VItem center><S w={15}><path d="M1 1h14v14H1z" fill="#9fc0c8" stroke="#2a5878" /><path d="M8 1v14M1 8h14" stroke="#2a5878" /></S></VItem>
              <VItem center>
                <svg viewBox="0 0 16 16" width="15" height="15">
                  <path d="M0 0h16v16H0z" fill="#20b0d8" />
                  <path d="M0 5h10v11H0z" fill="#30c050" />
                  <path d="M0 10h5v6H0z" fill="#e02020" />
                  <path d="M5 9h5v4H5z" fill="#e8e020" />
                  <path d="M.500 .500h15v15H.500z" fill="none" stroke="#224" />
                </svg>
              </VItem>
              <VItem center><svg viewBox="0 0 16 16" width="15" height="15"><path d="M0 0h8v8H0z" fill="#18a8d8" /><path d="M8 0h8v8H8z" fill="#20b8d8" /><path d="M0 8h8v8H0z" fill="#f08010" /><path d="M8 8h8v8H8z" fill="#e8e020" /></svg></VItem>
              <VItem center><Brace /></VItem>
              <VItem center><Brace><path d="M5 8h3V5l3.500 3L8 11V8" fill="#111" /></Brace></VItem>
              <VItem center><Brace><path d="M11 8H8V5L4.500 8 8 11V8" fill="#111" /></Brace></VItem>
              <VItem center><Brace><path d="M5 3h6v6H5z" fill="#30b878" stroke="#145" strokeWidth=".6" /><path d="M8 15l-3-3h2v-2h2v2h2z" fill="#111" /></Brace></VItem>
              <VItem center><Brace><path d="M5 8h6v6H5z" fill="#30b878" stroke="#145" strokeWidth=".6" /><path d="M8 1l3 3H9v3H7V4H5z" fill="#111" /></Brace></VItem>
              <VItem caret>
                <S w={18}><path d="M2 1.500h12v2l-2 1v10H2z" fill="#dde6f2" stroke="#6a7a90" /><path d="M4 5h6M4 7.500h6M4 10h6M4 12.500h6" stroke="#667" /></S>
              </VItem>
            </VT>
          </div>
        </div>

        {/* Status bar */}
        <div className={`h-[21px] shrink-0 flex items-center bg-[#f0f0f0] border-t border-t-[#a8a8a8] text-[#222] ${SANS}`}>
          <div className="w-[1004px] shrink-0 pl-[3px] pt-[2px] text-[11.4px] whitespace-pre h-full flex items-center border-r border-r-[#8a97a5]">Ready - Nodes: 22,  Elements: 20</div>
          <div className="flex ml-[10px] mt-[2px] gap-[16px] whitespace-nowrap text-[11.5px]">
            <span>Prop: 0</span>
            <span>Ld: 1</span>
            <span>Con: 3</span>
            <span>Grp: 0</span>
            <span>Out: 1</span>
          </div>
        </div>
      </div>

      <div className="h-[7px] shrink-0" />

      {/* Window outline */}
      <div className="absolute inset-0 rounded-t-[8px] rounded-b-[3px] border border-[#34444f] pointer-events-none" />

      {/* Tooltip callout */}
      <div className="absolute left-[123px] top-[415px] w-[347px] h-[61px] rounded-[6px] bg-gradient-to-b from-[#cfe6f6]/95 via-[#e6eff5]/90 to-[#e6eef4]/90 flex items-center pl-[3px] text-[23px] whitespace-nowrap font-['Open_Sans',sans-serif] tracking-[-0.53px] text-[#4a525a]">
        <span>Right Click&nbsp;</span>
        <span className="font-semibold text-[#333c46]">Constraint Definitions</span>
      </div>
      <svg viewBox="0 0 30 14" width="30" height="14" className="absolute left-[123px] top-[402px]">
        <path d="M0 14V0l22 14z" fill="#d3e8f6" fillOpacity=".9" />
      </svg>

      {/* Hand cursor */}
      <svg viewBox="0 0 18 24" width="18" height="24" className="absolute left-[52px] top-[380px]">
        <path d="M5 2c0-2 3-2 3 0v7l1-1c1-1 2 0 2 1 1-1 2 0 2 1 1-1 3 0 3 1v5c0 3-1 5-2 7H6c-1-2-4-5-5-8-1-2 1-3 2-2l2 2z" fill="#fff" stroke="#111" strokeWidth="1.100" />
        <path d="M8 9v5M11 9v5M13 10v4" stroke="#111" strokeWidth=".7" />
      </svg>
    </div>
  );
}
